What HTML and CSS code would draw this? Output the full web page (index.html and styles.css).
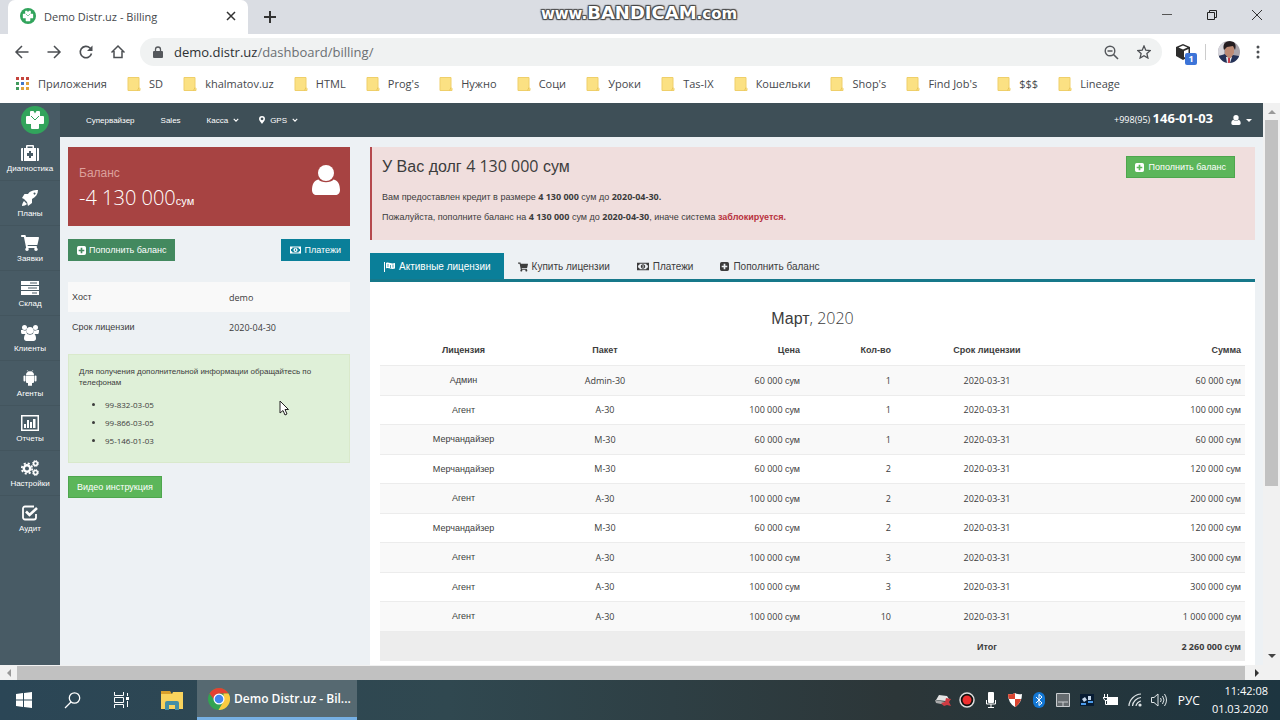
FILE: index.html
```html
<!DOCTYPE html>
<html lang="ru">
<head>
  <meta charset="UTF-8" />
  <title>Demo Distr.uz - Billing</title>
  <link rel="stylesheet" href="styles.css">
</head>
<body>
  <!-- shared icons -->
  <svg class="sprite" aria-hidden="true">
    <symbol id="logo" viewBox="0 0 28 28">
      <circle cx="14" cy="14" r="14" fill="#32a45c"/>
      <path fill="#fff" d="M10 5h2.500L14 7.500 15.500 5H18a1 1 0 0 1 1 1v4h3a1 1 0 0 1 1 1v6a1 1 0 0 1-1 1h-4v4a1 1 0 0 1-1 1h-6a1 1 0 0 1-1-1v-4H6a1 1 0 0 1-1-1v-6a1 1 0 0 1 1-1h3V6a1 1 0 0 1 1-1z"/>
      <path fill="none" stroke="#32a45c" stroke-width="1" d="M10 10l4 4 4-4"/>
    </symbol>
    <symbol id="cart" viewBox="0 0 576 512">
      <path fill="currentColor" d="M528.12 301.319l47.273-208C578.806 78.301 567.391 64 551.99 64H159.208l-9.166-44.81C147.758 8.021 137.93 0 126.529 0H24C10.745 0 0 10.745 0 24v16c0 13.255 10.745 24 24 24h69.883l70.248 343.435C147.325 417.1 136 435.222 136 456c0 30.928 25.072 56 56 56s56-25.072 56-56c0-15.674-6.447-29.835-16.824-40h209.647C430.447 426.165 424 440.326 424 456c0 30.928 25.072 56 56 56s56-25.072 56-56c0-22.172-12.888-41.332-31.579-50.405l5.517-24.276c3.413-15.018-8.002-29.319-23.403-29.319H218.117l-6.545-32h293.145c11.206 0 20.92-7.754 23.403-18.681z"/>
    </symbol>
    <symbol id="plus" viewBox="0 0 16 16">
      <path fill="currentColor" fill-rule="evenodd" d="M3 0h10a3 3 0 0 1 3 3v10a3 3 0 0 1-3 3H3a3 3 0 0 1-3-3V3a3 3 0 0 1 3-3zM6.500 3v3.500H3v3h3.500V13h3V9.500H13v-3H9.500V3z"/>
    </symbol>
    <symbol id="money" viewBox="0 0 22 16">
      <path fill="currentColor" fill-rule="evenodd" d="M0 1h22v14H0zM5 3a3 3 0 0 1-3 3v4a3 3 0 0 1 3 3h12a3 3 0 0 1 3-3V6a3 3 0 0 1-3-3zM11 4c2.500 0 4 1.800 4 4s-1.500 4-4 4-4-1.800-4-4 1.500-4 4-4zM10 6v1h.5v2H9.500v1h3V9h-.5V5.500h-1z"/>
    </symbol>
    <symbol id="user" viewBox="0 0 28 30">
      <circle cx="14" cy="8" r="8" fill="currentColor"/>
      <path fill="currentColor" d="M6.500 14.500C9 18 19 18 21.500 14.500 26 15 28 20 28 25c0 3-2 5-4.500 5h-19C2 30 0 28 0 25c0-5 2-10 6.500-10.500z"/>
    </symbol>
    <symbol id="folder" viewBox="0 0 14 14">
      <path fill="#fbe183" stroke="#efcf6a" d="M1 .5h11v10l1 1v2H1z"/>
      <path fill="none" stroke="#e9c65b" d="M12 10.500l-1.500 3"/>
    </symbol>
    <symbol id="chev" viewBox="0 0 8 8">
      <path fill="none" stroke="currentColor" stroke-width="1.500" d="M1 2.500L4 5.500l3-3"/>
    </symbol>
  </svg>

  <header class="browser">
    <div class="tabstrip">
      <div class="tab">
        <svg class="favicon"><use href="#logo"/></svg>
        <span>Demo Distr.uz - Billing</span>
        <button class="plain tab-close" aria-label="Закрыть вкладку"><svg width="10" height="10" viewBox="0 0 10 10"><path d="M1 1l8 8M9 1L1 9" stroke="#333" stroke-width="1.500"/></svg></button>
      </div>
      <button class="plain new-tab" aria-label="Новая вкладка"><svg width="14" height="14" viewBox="0 0 14 14"><path d="M7 1v12M1 7h12" stroke="#333" stroke-width="2"/></svg></button>
      <div class="watermark">www.<b>BANDICAM</b>.com</div>
      <div class="window-buttons">
        <button class="plain" aria-label="Свернуть"><svg width="12" height="12" viewBox="0 0 12 12"><path d="M1 5.500h10" stroke="#555"/></svg></button>
        <button class="plain" aria-label="Развернуть"><svg width="12" height="12" viewBox="0 0 12 12"><path d="M3.500 3V1.500h7v7H9M1.500 3.500h7v7h-7z" fill="none" stroke="#222"/></svg></button>
        <button class="plain" aria-label="Закрыть"><svg width="12" height="12" viewBox="0 0 12 12"><path d="M1 1l10 10M11 1L1 11" stroke="#333"/></svg></button>
      </div>
    </div>

    <div class="toolbar">
      <button class="plain" aria-label="Назад"><svg width="16" height="16" viewBox="0 0 16 16"><path d="M14.500 8H2M8 2L2 8l6 6" fill="none" stroke="#4c4f53" stroke-width="1.500"/></svg></button>
      <button class="plain" aria-label="Вперёд"><svg width="16" height="16" viewBox="0 0 16 16"><path d="M1.500 8H14M8 2l6 6-6 6" fill="none" stroke="#4c4f53" stroke-width="1.500"/></svg></button>
      <button class="plain" aria-label="Обновить"><svg width="16" height="16" viewBox="0 0 16 16"><path d="M13.500 9.500A5.700 5.700 0 1 1 12 4l1.500 1.500" fill="none" stroke="#4c4f53" stroke-width="1.600"/><path d="M14.500 1.500v5.500H9z" fill="#4c4f53"/></svg></button>
      <button class="plain" aria-label="Домой"><svg width="16" height="16" viewBox="0 0 16 16"><path d="M1.500 8.500L8 2l6.500 6.500M4 7v6.500h8V7" fill="none" stroke="#4c4f53" stroke-width="1.500"/></svg></button>
      <div class="address">
        <svg width="10" height="12" viewBox="0 0 10 12"><path d="M1 5h8a1 1 0 0 1 1 1v5a1 1 0 0 1-1 1H1a1 1 0 0 1-1-1V6a1 1 0 0 1 1-1z" fill="#55585c"/><path d="M2.500 5.500V3.500a2.500 2.500 0 0 1 5 0v2" fill="none" stroke="#55585c" stroke-width="1.300"/></svg>
        <a class="url" href="#">demo.distr.uz<span>/dashboard/billing/</span></a>
        <svg width="15" height="15" viewBox="0 0 15 15" fill="none" stroke="#55585c"><circle cx="6" cy="6" r="4.800" stroke-width="1.400"/><path d="M3.500 6h5M9.500 9.500L14 14" stroke-width="1.600"/></svg>
        <svg width="14" height="14" viewBox="0 0 14 14"><path d="M7 1l1.800 4.200 4.500.4-3.400 3 1 4.400L7 10.700 3.100 13l1-4.400-3.400-3 4.500-.4z" fill="none" stroke="#4c4f53" stroke-width="1.300"/></svg>
      </div>
      <button class="plain extension" aria-label="Расширение">
        <svg width="16" height="16" viewBox="0 0 16 16"><path d="M8 0l7 3v9l-7 4-7-4V3z" fill="#2d2d2d"/><path d="M8 1.500L12.500 3.500 8 5.500 3.500 3.500z" fill="#fff"/><path d="M9 7l4.500-2v6L9 13.500z" fill="#fff"/></svg>
        <span class="badge">1</span>
      </button>
      <i class="divider"></i>
      <button class="plain" aria-label="Профиль">
        <svg width="22" height="22" viewBox="0 0 22 22"><clipPath id="round"><circle cx="11" cy="11" r="11"/></clipPath><g clip-path="url(#round)"><path fill="#a9a4ab" d="M0 0h22v22H0z"/><path fill="#d6d5dc" d="M0 0h6v14H0z"/><path fill="#243258" d="M1 15l6-2 4 3 4-2 6 1v8H1z"/><path fill="#e4e6ef" d="M8 16h6l-2 6H9z"/><path fill="#c5404a" d="M10 17h2v5h-2z"/><path fill="#bd8a74" d="M7 5h9v7l-3 5h-3l-3-4z"/><path fill="#241d20" d="M6 9C4 3 8 0 12 0s7 3 5 9l-2-4-6 1z"/></g></svg>
      </button>
      <button class="plain" aria-label="Меню"><svg width="4" height="14" viewBox="0 0 4 14" fill="#4c4f53"><circle cx="2" cy="2" r="1.500"/><circle cx="2" cy="7" r="1.500"/><circle cx="2" cy="12" r="1.500"/></svg></button>
    </div>

    <nav class="bookmarks">
      <a href="#"><svg viewBox="0 0 14 14"><path fill="#c5443c" d="M0 0h3v3H0zM5 0h3v3H5zM10 0h3v3h-3z"/><path fill="#3f9a5c" d="M0 5h3v3H0z"/><path fill="#4277c9" d="M5 5h3v3H5z"/><path fill="#e0a13c" d="M10 5h3v3h-3zM5 10h3v3H5zM10 10h3v3h-3z"/><path fill="#3f9a5c" d="M0 10h3v3H0z"/></svg>Приложения</a>
      <a href="#"><svg><use href="#folder"/></svg>SD</a>
      <a href="#"><svg><use href="#folder"/></svg>khalmatov.uz</a>
      <a href="#"><svg><use href="#folder"/></svg>HTML</a>
      <a href="#"><svg><use href="#folder"/></svg>Prog's</a>
      <a href="#"><svg><use href="#folder"/></svg>Нужно</a>
      <a href="#"><svg><use href="#folder"/></svg>Соци</a>
      <a href="#"><svg><use href="#folder"/></svg>Уроки</a>
      <a href="#"><svg><use href="#folder"/></svg>Tas-IX</a>
      <a href="#"><svg><use href="#folder"/></svg>Кошельки</a>
      <a href="#"><svg><use href="#folder"/></svg>Shop's</a>
      <a href="#"><svg><use href="#folder"/></svg>Find Job's</a>
      <a href="#"><svg><use href="#folder"/></svg>$$$</a>
      <a href="#"><svg><use href="#folder"/></svg>Lineage</a>
    </nav>
  </header>

  <div class="viewport">
    <aside class="sidebar">
      <a class="brand" href="#" aria-label="Distr.uz"><svg width="28" height="28"><use href="#logo"/></svg></a>
      <a class="side-link" href="#">
        <svg viewBox="0 0 18 16"><path fill="#fff" fill-rule="evenodd" d="M1 3h1v13H1a1 1 0 0 1-1-1V4a1 1 0 0 1 1-1zM16 3h1a1 1 0 0 1 1 1v11a1 1 0 0 1-1 1h-1zM3 3h2V1a1 1 0 0 1 1-1h6a1 1 0 0 1 1 1v2h2v13H3zM6.500 1.500V3h5V1.500zM8 6v2H6v3h2v2h2v-2h2V8h-2V6z"/></svg>
        Диагностика
      </a>
      <a class="side-link" href="#">
        <svg viewBox="0 0 18 16"><path fill="#fff" fill-rule="evenodd" d="M17 0c0 4-2 7-6 9v4l-4 3-1-4-3-3-2-1 2.500-4H7c2-3 5-4 10-4zM13.500 2.500a1 1 0 1 0 .1 0zM3 11l3 3c-1 1-3 2-5 2 0-2 1-4 2-5z"/></svg>
        Планы
      </a>
      <a class="side-link" href="#">
        <svg><use href="#cart"/></svg>
        Заявки
      </a>
      <a class="side-link" href="#">
        <svg viewBox="0 0 18 16"><path fill="#fff" fill-rule="evenodd" d="M0 1h18v4H0zM0 6h18v4H0zM0 11h18v4H0zM9 2.500v1h7v-1zM7 7.500v1h9v-1zM11 12.500v1h5v-1z"/></svg>
        Склад
      </a>
      <a class="side-link" href="#">
        <svg viewBox="0 0 18 16"><g fill="#fff"><circle cx="3.500" cy="2.500" r="2.500"/><circle cx="14.500" cy="2.500" r="2.500"/><path d="M2 5c2 1 3 .5 4 0-1 2 0 3 0 4H1C0 9 0 6 0 5zM16 5c-2 1-3 .5-4 0 1 2 0 3 0 4h5c1 0 1-3 1-4z"/><circle cx="9" cy="5.500" r="3.500"/><path d="M5.500 8.500C7 10 11 10 12.500 8.500c2 .5 2.500 3 2.500 5 0 1.500-1 2.500-2.500 2.500h-7C4 16 3 15 3 13.500c0-2 .5-4.500 2.500-5z"/></g></svg>
        Клиенты
      </a>
      <a class="side-link" href="#">
        <svg viewBox="0 0 18 16"><g fill="#fff"><path d="M5 5c0-5 8-5 8 0zM5 5.500h8V12a1 1 0 0 1-1 1h-1v2a1 1 0 0 1-2 0v-2v2a1 1 0 0 1-2 0v-2H6a1 1 0 0 1-1-1z"/><rect x="2.500" y="5.500" width="2" height="6" rx="1"/><rect x="13.500" y="5.500" width="2" height="6" rx="1"/><path d="M6 0l1.500 2M12 0l-1.500 2" stroke="#fff" stroke-width=".5"/></g></svg>
        Агенты
      </a>
      <a class="side-link" href="#">
        <svg viewBox="0 0 18 16"><path fill="#fff" fill-rule="evenodd" d="M0 0h18v16H0zM1.500 1.500v13h15v-13z"/><path fill="#fff" d="M3 9h2v4H3zM6 5h2v8H6zM9 7h2v6H9zM12 4h2.500v9H12z"/></svg>
        Отчеты
      </a>
      <a class="side-link" href="#">
        <svg viewBox="0 0 18 16" fill="none" stroke="#fff"><circle cx="6" cy="8.500" r="3.200" stroke-width="2.400"/><circle cx="6" cy="8.500" r="5.200" stroke-width="1.800" stroke-dasharray="2.100 2"/><circle cx="14.500" cy="3.500" r="1.900" stroke-width="1.500"/><circle cx="14.500" cy="3.500" r="3" stroke-width="1" stroke-dasharray="1.300 1.050"/><circle cx="14.500" cy="12.500" r="1.900" stroke-width="1.500"/><circle cx="14.500" cy="12.500" r="3" stroke-width="1" stroke-dasharray="1.300 1.050"/></svg>
        Настройки
      </a>
      <a class="side-link" href="#">
        <svg viewBox="0 0 18 16" fill="none" stroke="#fff"><path stroke-width="1.800" d="M15 9v3.500a2 2 0 0 1-2 2H4a2 2 0 0 1-2-2v-9a2 2 0 0 1 2-2h9"/><path stroke-width="2.600" d="M5 6.500l3.500 3.500L16 3"/></svg>
        Аудит
      </a>
    </aside>

    <div class="page">
      <nav class="topnav">
        <a href="#">Супервайзер</a>
        <a href="#">Sales</a>
        <a href="#">Касса <svg width="6" height="6"><use href="#chev"/></svg></a>
        <a href="#"><svg width="6" height="8" viewBox="0 0 6 8"><path fill="#fff" fill-rule="evenodd" d="M3 0a3 3 0 0 1 3 3c0 1.500-2 3.500-3 5-1-1.500-3-3.500-3-5a3 3 0 0 1 3-3zM3 1.500a1.400 1.400 0 1 0 .1 0z"/></svg>GPS <svg width="6" height="6"><use href="#chev"/></svg></a>
        <div class="phone">+998(95) <b>146-01-03</b></div>
        <button class="plain account" aria-label="Аккаунт"><svg width="10" height="10"><use href="#user"/></svg><i class="caret"></i></button>
      </nav>

      <main class="content">
        <section class="left">
          <div class="balance">
            <div>
              <div class="balance-title">Баланс</div>
              <div class="balance-sum">-4 130 000<small>сум</small></div>
            </div>
            <svg width="28" height="30"><use href="#user"/></svg>
          </div>
          <div class="actions">
            <button class="btn btn-sea"><svg width="9" height="9"><use href="#plus"/></svg>Пополнить баланс</button>
            <button class="btn btn-blue"><svg width="11" height="8"><use href="#money"/></svg>Платежи</button>
          </div>
          <table class="info">
            <tr><th scope="row">Хост</th><td>demo</td></tr>
            <tr><th scope="row">Срок лицензии</th><td>2020-04-30</td></tr>
          </table>
          <div class="contacts">
            <p>Для получения дополнительной информации обращайтесь по телефонам</p>
            <ul>
              <li>99-832-03-05</li>
              <li>99-866-03-05</li>
              <li>95-146-01-03</li>
            </ul>
          </div>
          <button class="btn btn-green">Видео инструкция</button>
        </section>

        <section class="right">
          <div class="debt">
            <div>
              <h2>У Вас долг <span class="num">4 130 000</span> сум</h2>
              <p>Вам предоставлен кредит в размере <b>4 130 000</b> сум до <b>2020-04-30.</b></p>
              <p>Пожалуйста, пополните баланс на <b>4 130 000</b> сум до <b>2020-04-30</b>, иначе система <strong>заблокируется.</strong></p>
            </div>
            <button class="btn btn-green"><svg width="9" height="9"><use href="#plus"/></svg> Пополнить баланс</button>
          </div>

          <nav class="tabs">
            <a class="active" href="#"><svg width="11" height="10" viewBox="0 0 11 10"><path fill="currentColor" d="M0 0h1v10H0zM2 1c3-1.500 5 1.500 9 0v5.500c-4 1.500-6-1.500-9 0z"/><path d="M4 2v3M6.500 3v3M9 2.500v3" stroke="#0a7f99" stroke-width=".7"/></svg>Активные лицензии</a>
            <a href="#"><svg width="10" height="10"><use href="#cart"/></svg>Купить лицензии</a>
            <a href="#"><svg width="12" height="9"><use href="#money"/></svg>Платежи</a>
            <a href="#"><svg width="9" height="9"><use href="#plus"/></svg>Пополнить баланс</a>
          </nav>

          <div class="panel">
            <h3>Март<span class="num">, 2020</span></h3>
            <table class="licenses">
              <colgroup>
                <col class="c-license"><col class="c-pack"><col class="c-price"><col class="c-count"><col class="c-term"><col class="c-sum">
              </colgroup>
              <thead>
                <tr><th>Лицензия</th><th>Пакет</th><th>Цена</th><th>Кол-во</th><th>Срок лицензии</th><th>Сумма</th></tr>
              </thead>
              <tbody>
                <tr><td>Админ</td><td>Admin-30</td><td>60 000 <i>сум</i></td><td>1</td><td>2020-03-31</td><td>60 000 <i>сум</i></td></tr>
                <tr><td>Агент</td><td>A-30</td><td>100 000 <i>сум</i></td><td>1</td><td>2020-03-31</td><td>100 000 <i>сум</i></td></tr>
                <tr><td>Мерчандайзер</td><td>M-30</td><td>60 000 <i>сум</i></td><td>1</td><td>2020-03-31</td><td>60 000 <i>сум</i></td></tr>
                <tr><td>Мерчандайзер</td><td>M-30</td><td>60 000 <i>сум</i></td><td>2</td><td>2020-03-31</td><td>120 000 <i>сум</i></td></tr>
                <tr><td>Агент</td><td>A-30</td><td>100 000 <i>сум</i></td><td>2</td><td>2020-03-31</td><td>200 000 <i>сум</i></td></tr>
                <tr><td>Мерчандайзер</td><td>M-30</td><td>60 000 <i>сум</i></td><td>2</td><td>2020-03-31</td><td>120 000 <i>сум</i></td></tr>
                <tr><td>Агент</td><td>A-30</td><td>100 000 <i>сум</i></td><td>3</td><td>2020-03-31</td><td>300 000 <i>сум</i></td></tr>
                <tr><td>Агент</td><td>A-30</td><td>100 000 <i>сум</i></td><td>3</td><td>2020-03-31</td><td>300 000 <i>сум</i></td></tr>
                <tr><td>Агент</td><td>A-30</td><td>100 000 <i>сум</i></td><td>10</td><td>2020-03-31</td><td>1 000 000 <i>сум</i></td></tr>
              </tbody>
              <tfoot>
                <tr><td></td><td></td><td></td><td></td><td><i>Итог</i></td><td>2 260 000 <i>сум</i></td></tr>
              </tfoot>
            </table>
          </div>
        </section>
      </main>
      <svg class="cursor" width="10" height="16" viewBox="0 0 10 16"><path d="M1 1v12l3-2.500L6 15l2-1-2-4.500h3.500z" fill="#fff" stroke="#222"/></svg>
    </div>

    <div class="vscroll"><i class="arrow up"></i><div class="vthumb"></div><i class="arrow down"></i></div>
  </div>
  <div class="hscroll"><i class="arrow left-arrow"></i><div class="hthumb"></div><i class="arrow right-arrow"></i></div>

  <footer class="taskbar">
    <button class="plain" aria-label="Пуск"><svg width="16" height="16" viewBox="0 0 16 16"><path fill="#fff" d="M0 2l7-1v6.500H0zM8 1l8-1v7.500H8zM0 8.500h7V15l-7-1zM8 8.500h8V16l-8-1z"/></svg></button>
    <button class="plain" aria-label="Поиск"><svg width="17" height="17" viewBox="0 0 17 17" fill="none" stroke="#fff" stroke-width="1.300"><circle cx="10.500" cy="6" r="5.200"/><path d="M7 10l-6 6"/></svg></button>
    <button class="plain" aria-label="Представление задач"><svg width="16" height="16" viewBox="0 0 16 16" fill="none" stroke="#fff"><path d="M1.500 0v3.500h9V0M1.500 5.500h9v5h-9zM1.500 16v-3.500h9V16M14.500 1v3M14.500 9v6"/><path d="M14.500 5v3" stroke-width="3"/></svg></button>
    <button class="plain" aria-label="Проводник"><svg width="22" height="19" viewBox="0 0 22 19"><path fill="#d9a02c" d="M0 0h9l2 3H0z"/><path fill="#f9d35d" d="M0 3h11l1-2h10v17H0z"/><path fill="#438fa5" d="M4 19v-7q0-2 2-2h10q2 0 2 2v7h-4v-5H8v5z"/></svg></button>
    <button class="task">
      <svg width="22" height="22" viewBox="0 0 22 22"><circle cx="11" cy="11" r="11" fill="#33a352"/><path fill="#e34133" d="M1.500 5.500A11 11 0 0 1 20.500 5.500H11L7 13z"/><path fill="#fbcb42" d="M20.500 5.500A11 11 0 0 1 10.500 22l5-8.500V5.500z"/><circle cx="11" cy="11" r="5.500" fill="#fff"/><circle cx="11" cy="11" r="4.300" fill="#4285f0"/></svg>
      Demo Distr.uz - Bil...
    </button>
    <div class="tray">
      <svg viewBox="0 0 16 16"><path fill="#e4e4e4" d="M4 3l8 1 2 3-3 2-10-1z"/><path fill="#aaa" d="M0 8l11 2v3L1 11z"/><path fill="#cf3c43" d="M11 6l5 1-2 3 2 4-4-1-3 1-3-3 4-1z"/></svg>
      <svg viewBox="0 0 16 16"><circle cx="8" cy="8" r="7" fill="#111" stroke="#ddd" stroke-width="1.500"/><circle cx="8" cy="8" r="4.500" fill="#ef2f2f"/></svg>
      <svg viewBox="0 0 16 16"><rect x="5" y="0" width="6" height="11" rx="1" fill="#fff"/><path d="M3.500 8v4h9V8M8 12v3M5 15.500h6" fill="none" stroke="#fff"/></svg>
      <svg viewBox="0 0 16 16"><path fill="#fff" d="M1 2q4 1 7-1 3 2 7 1 0 9-7 13Q1 11 1 2z"/><path fill="#d9432f" d="M1 2q4 1 7-1v6H2Q1 5 1 2zM8 7h6q-1 5-6 8z"/></svg>
      <svg viewBox="0 0 16 16"><rect x="2" y="0" width="12" height="16" rx="6" fill="#1277d5"/><path d="M5 5l6 6-3 2.500v-11L11 5l-6 6" fill="none" stroke="#fff"/></svg>
      <svg viewBox="0 0 16 16"><path fill="#666c70" stroke="#c9cdd0" d="M1.500 1.500h13v13h-13z"/><path stroke="#c9cdd0" d="M3 10h10M8 10v4"/></svg>
      <svg viewBox="0 0 16 16"><path fill="#071c33" d="M1 2h14v12H1z"/><path fill="#c4d6ea" d="M3 7l3-2 2 3-3 2zM9 4h3v4H9z"/><path fill="#4c9bea" d="M2 11h5v2H2zM9 9h5v2H9z"/></svg>
      <svg viewBox="0 0 16 16"><path fill="#fff" d="M4 5h11v8H4z"/><path fill="none" stroke="#fff" d="M2.500 8v4.500h3M1.500 2v3M4.500 2v3M0 5.500h5l-1 3H2z"/></svg>
      <svg viewBox="0 0 16 16" fill="none" stroke="#dfe5e7" stroke-width="1.200"><path d="M2 14C2 8 8 2 14 2M5.500 14c0-4 4.500-8.500 8.500-8.500M9 14c0-2 3-5 5-5"/><circle cx="13" cy="13" r="1" fill="#fff"/></svg>
      <svg viewBox="0 0 16 16" fill="none" stroke="#dfe5e7"><path d="M.5 5.500H3L7 2v12L3 10.500H.5zM9.500 6q1.500 2 0 4M11.500 4q3 4 0 8M13.500 2q4 6 0 12"/></svg>
    </div>
    <span class="lang">РУС</span>
    <div class="clock">11:42:08<br>01.03.2020</div>
  </footer>
</body>
</html>
```
FILE: styles.css
```css
* {
  box-sizing: border-box;
}
body {
  margin: 0;
  height: 100vh;
  display: flex;
  flex-direction: column;
  overflow: hidden;
  font-family: "Liberation Sans", Arial, sans-serif;
  font-size: 9px;
  color: #3c3c3c;
}
a {
  color: inherit;
  text-decoration: none;
}
svg {
  display: block;
  flex: none;
}
button {
  font-family: inherit;
}
.sprite {
  position: absolute;
  width: 0;
  height: 0;
}
.plain {
  background: none;
  border: 0;
  padding: 0;
  color: inherit;
}
.num {
  font-family: "Open Sans", sans-serif;
}

/* browser window */
.browser {
  font-family: "Open Sans", "Noto Sans", sans-serif;
}
.tabstrip {
  position: relative;
  display: flex;
  align-items: center;
  height: 34px;
  padding-left: 8px;
  background: #dadde3;
}
.tab {
  display: flex;
  align-items: center;
  gap: 8px;
  width: 240px;
  height: 34px;
  padding: 0 12px 2px;
  border-radius: 7px 7px 0 0;
  background: #fff;
  font-size: 11px;
  color: #45484c;
}
.favicon {
  width: 16px;
  height: 16px;
}
.tab-close {
  margin-left: auto;
}
.new-tab {
  margin-left: 15px;
}
.watermark {
  position: absolute;
  left: 50%;
  top: 4px;
  width: 220px;
  margin-left: -111px;
  text-align: center;
  font: bold 15px/18px "DejaVu Sans", sans-serif;
  color: #fff;
  text-shadow: 1px 1px 1px #444, -1px -1px 1px #444, 1px -1px 1px #444, -1px 1px 1px #444;
}
.watermark b {
  font-size: 18px;
}
.window-buttons {
  display: flex;
  gap: 33px;
  margin-left: auto;
  padding: 0 17px 4px 0;
}
.toolbar {
  display: flex;
  align-items: center;
  gap: 16px;
  height: 36px;
  padding: 0 20px 0 14px;
  background: #fff;
}
.address {
  display: flex;
  align-items: center;
  gap: 18px;
  flex: 1;
  height: 28px;
  margin-left: -2px;
  padding: 0 11px 0 13px;
  border-radius: 14px;
  background: #f0f2f2;
}
.url {
  flex: 1;
  margin-left: -7px;
  font-size: 13px;
  color: #2d3033;
}
.url span {
  color: #6b6f73;
}
.extension {
  position: relative;
  margin: 0 1px 0 -3px;
}
.badge {
  position: absolute;
  left: 10px;
  top: 9px;
  width: 12px;
  height: 12px;
  border-radius: 2px;
  background: #3c74d8;
  color: #fff;
  font: bold 9px/12px "Open Sans", sans-serif;
}
.divider {
  width: 1px;
  height: 16px;
  margin: 0 -4px 0 -3px;
  background: #ccc;
}
.bookmarks {
  display: flex;
  align-items: center;
  justify-content: space-between;
  height: 33px;
  padding: 0 160px 6px 16px;
  background: #fff;
  font-size: 11px;
  color: #45484c;
}
.bookmarks a {
  display: flex;
  align-items: center;
  gap: 8px;
}
.bookmarks svg {
  width: 14px;
  height: 14px;
}

/* site */
.viewport {
  flex: 1;
  display: flex;
  min-height: 0;
  background: #edf1f4;
}
.sidebar {
  width: 60px;
  background: #485b65;
  color: #fff;
}
.brand {
  display: flex;
  justify-content: center;
  align-items: center;
  height: 33px;
  padding-left: 10px;
}
.side-link {
  display: flex;
  flex-direction: column;
  align-items: center;
  gap: 3px;
  height: 45px;
  padding-top: 9px;
  border-bottom: 1px solid #43555e;
  font-size: 8px;
  line-height: 10px;
}
.side-link:last-child {
  border: 0;
}
.side-link svg {
  width: 18px;
  height: 16px;
}
.page {
  position: relative;
  flex: 1;
  display: flex;
  flex-direction: column;
  min-width: 0;
  overflow: hidden;
}
.topnav {
  display: flex;
  align-items: center;
  gap: 26px;
  flex: none;
  height: 34px;
  padding: 0 11px 0 26px;
  background: #3e4f57;
  color: #fff;
  font-size: 8px;
}
.topnav a {
  display: flex;
  align-items: center;
  gap: 5px;
}
.topnav a:nth-child(4) {
  margin-left: -6px;
}
.phone {
  margin-left: auto;
  padding-bottom: 4px;
  font-family: "Open Sans", sans-serif;
  font-size: 9px;
}
.phone b {
  font-size: 13px;
}
.account {
  display: flex;
  align-items: center;
  gap: 5px;
  margin-left: -8px;
}
.caret {
  border: 3px solid transparent;
  border-top-color: #fff;
  border-bottom: 0;
}
.content {
  display: grid;
  grid-template-columns: 282px 1fr;
  gap: 20px;
  flex: 1;
  min-height: 0;
  padding: 10px 8px 0;
}
.left {
  min-width: 0;
}
.balance {
  display: flex;
  justify-content: space-between;
  height: 79px;
  padding: 18px 10px 0 11px;
  background: #a74342;
  color: #fff;
}
.balance-title {
  font-size: 12px;
  line-height: 16px;
  color: #dca09c;
}
.balance-sum {
  font: 300 20px/34px "Open Sans", sans-serif;
}
.balance-sum small {
  font: 11px "Liberation Sans", sans-serif;
}
.actions {
  display: flex;
  justify-content: space-between;
  margin: 13px 0 21px;
}
.btn {
  display: flex;
  align-items: center;
  gap: 3px;
  height: 22px;
  padding: 0 8px;
  border: 1px solid transparent;
  font-size: 9px;
  color: #fff;
}
.btn-sea {
  background: #43895f;
}
.btn-blue {
  background: #0a7f99;
}
.btn-green {
  background: #5cb65a;
  border-color: #4ea64d;
}
.info {
  width: 100%;
  border-collapse: collapse;
  table-layout: fixed;
}
.info tr:first-child {
  background: #f9f9f9;
}
.info th,
.info td {
  height: 30px;
  padding: 0 4px;
  text-align: left;
  font-weight: normal;
}
.info th {
  width: 157px;
}
.info td {
  font-family: "Open Sans", sans-serif;
}
.contacts {
  height: 109px;
  margin: 12px 0 13px;
  padding: 11px 10px;
  border: 1px solid #d9e9cb;
  background: #dff0d8;
  font-size: 8px;
  line-height: 11px;
}
.contacts p {
  margin: 0 0 8px;
}
.contacts ul {
  margin: 0;
  padding-left: 26px;
  font-family: "Open Sans", sans-serif;
  line-height: 18px;
}
.debt {
  display: flex;
  justify-content: space-between;
  align-items: flex-start;
  height: 93px;
  padding: 9px 20px 0 10px;
  border-left: 2px solid #b5494d;
  background: #f0dedd;
}
.debt h2 {
  margin: 0 0 10px;
  font-size: 16px;
  line-height: 20px;
  font-weight: normal;
}
.debt p {
  margin: 0;
  line-height: 20px;
}
.debt b {
  font-family: "Open Sans", sans-serif;
}
.debt strong {
  color: #b8323d;
}
.debt .btn {
  gap: 5px;
}
.tabs {
  display: flex;
  height: 29px;
  margin-top: 13px;
  border-bottom: 3px solid #17788a;
  font-size: 10px;
}
.tabs a {
  display: flex;
  align-items: center;
  gap: 4px;
  padding: 3px 13px 2px 14px;
}
.tabs .active {
  background: #0a7f99;
  color: #fff;
}
.panel {
  padding: 26px 10px 10px;
  background: #fff;
}
.panel h3 {
  margin: 0 0 6px;
  text-align: center;
  font-size: 16px;
  line-height: 20px;
  font-weight: normal;
}
.panel h3 .num {
  font-weight: 300;
}
.licenses {
  width: 100%;
  border-collapse: collapse;
  table-layout: fixed;
  text-align: center;
}
.c-license { width: 167px; }
.c-pack { width: 116px; }
.c-price { width: 141px; }
.c-count { width: 91px; }
.c-term { width: 184px; }
.c-sum { width: 166px; }
.licenses th,
.licenses td {
  height: 30px;
  padding: 0 4px;
}
.licenses td {
  border-top: 1px solid #ececec;
  font-family: "Open Sans", sans-serif;
}
.licenses tr:nth-child(even) td {
  height: 29px;
}
.licenses i,
.licenses td:first-child {
  font-family: "Liberation Sans", sans-serif;
  font-style: normal;
}
.licenses th:nth-child(3),
.licenses th:nth-child(4),
.licenses th:nth-child(6),
.licenses td:nth-child(3),
.licenses td:nth-child(4),
.licenses td:nth-child(6) {
  text-align: right;
}
.licenses tbody tr:nth-child(odd) {
  background: #f9f9f9;
}
.licenses tfoot {
  background: #ededed;
  font-weight: bold;
}
.cursor {
  position: absolute;
  left: 219px;
  top: 297px;
}

/* scrollbars */
.vscroll {
  display: flex;
  flex-direction: column;
  align-items: center;
  width: 17px;
  padding: 7px 0;
  background: #f1f1f1;
}
.vthumb {
  width: 13px;
  height: 366px;
  margin: 6px 0 auto;
  background: #c1c1c1;
}
.hscroll {
  display: flex;
  align-items: center;
  height: 15px;
  padding: 0 21px 0 7px;
  background: #f1f1f1;
}
.hthumb {
  flex: 1;
  height: 14px;
  margin: 0 10px 0 6px;
  background: #c1c1c1;
}
.arrow {
  border: 4px solid transparent;
}
.up {
  border-top: 0;
  border-bottom-color: #999;
}
.down {
  border-bottom: 0;
  border-top-color: #444;
}
.left-arrow {
  border-left: 0;
  border-right-color: #999;
}
.right-arrow {
  border-right: 0;
  border-left-color: #333;
}

/* taskbar */
.taskbar {
  display: flex;
  align-items: center;
  gap: 32px;
  height: 40px;
  padding: 0 12px 0 16px;
  background: linear-gradient(90deg, #2b4656, #304850 35%, #2c3638 70%, #1d3540);
  color: #fff;
  font-family: "Open Sans", "Noto Sans", sans-serif;
}
.task {
  display: flex;
  align-items: center;
  gap: 4px;
  width: 160px;
  height: 40px;
  margin-left: -18px;
  padding: 0 11px;
  border: 0;
  border-bottom: 3px solid #76b0e4;
  background: #566971;
  color: #fff;
  font-size: 12px;
  font-weight: 600;
  white-space: nowrap;
}
.tray {
  display: flex;
  gap: 8px;
  margin-left: auto;
}
.tray svg {
  width: 16px;
  height: 16px;
}
.lang {
  margin-left: -21px;
  font-size: 12px;
}
.clock {
  margin-left: -20px;
  text-align: right;
  font-size: 11px;
  font-weight: 500;
  line-height: 18px;
}
```
